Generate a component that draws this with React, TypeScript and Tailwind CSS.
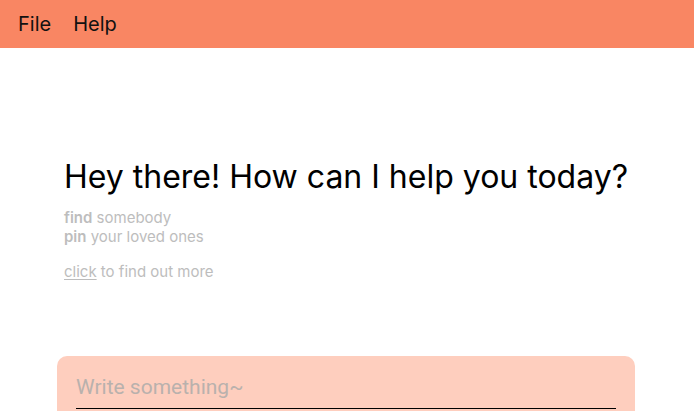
export default function App() {
  return (
    <div className="w-[694px] h-[411px] overflow-hidden bg-white font-['Inter',sans-serif]">
      <div className="h-12 bg-[#f98663] flex items-center gap-[22px] px-[18px] text-[20px] text-[#111]">
        <span>File</span>
        <span>Help</span>
      </div>
      <div className="pl-16 pt-[110px]">
        <h1 className="text-[32px] leading-[38px] text-black">Hey there! How can I help you today?</h1>
        <div className="mt-[12px] text-[15px] leading-[19px] text-[#bdbdbd]">
          <p><b className="font-semibold">find</b> somebody</p>
          <p><b className="font-semibold">pin</b> your loved ones</p>
          <p className="mt-[16px]"><span className="underline underline-offset-2">click</span> to find out more</p>
        </div>
      </div>
      <div className="mt-[75px] ml-[57px] w-[578px] h-[80px] rounded-[10px] bg-[#fecebe] px-[19px] pt-[16px]">
        <input
          className="w-full bg-transparent outline-none border-b border-black pb-[4px] text-[21px] font-['Roboto',sans-serif] placeholder:text-[#b9b1ad]"
          placeholder="Write something~"
        />
      </div>
    </div>
  );
}
